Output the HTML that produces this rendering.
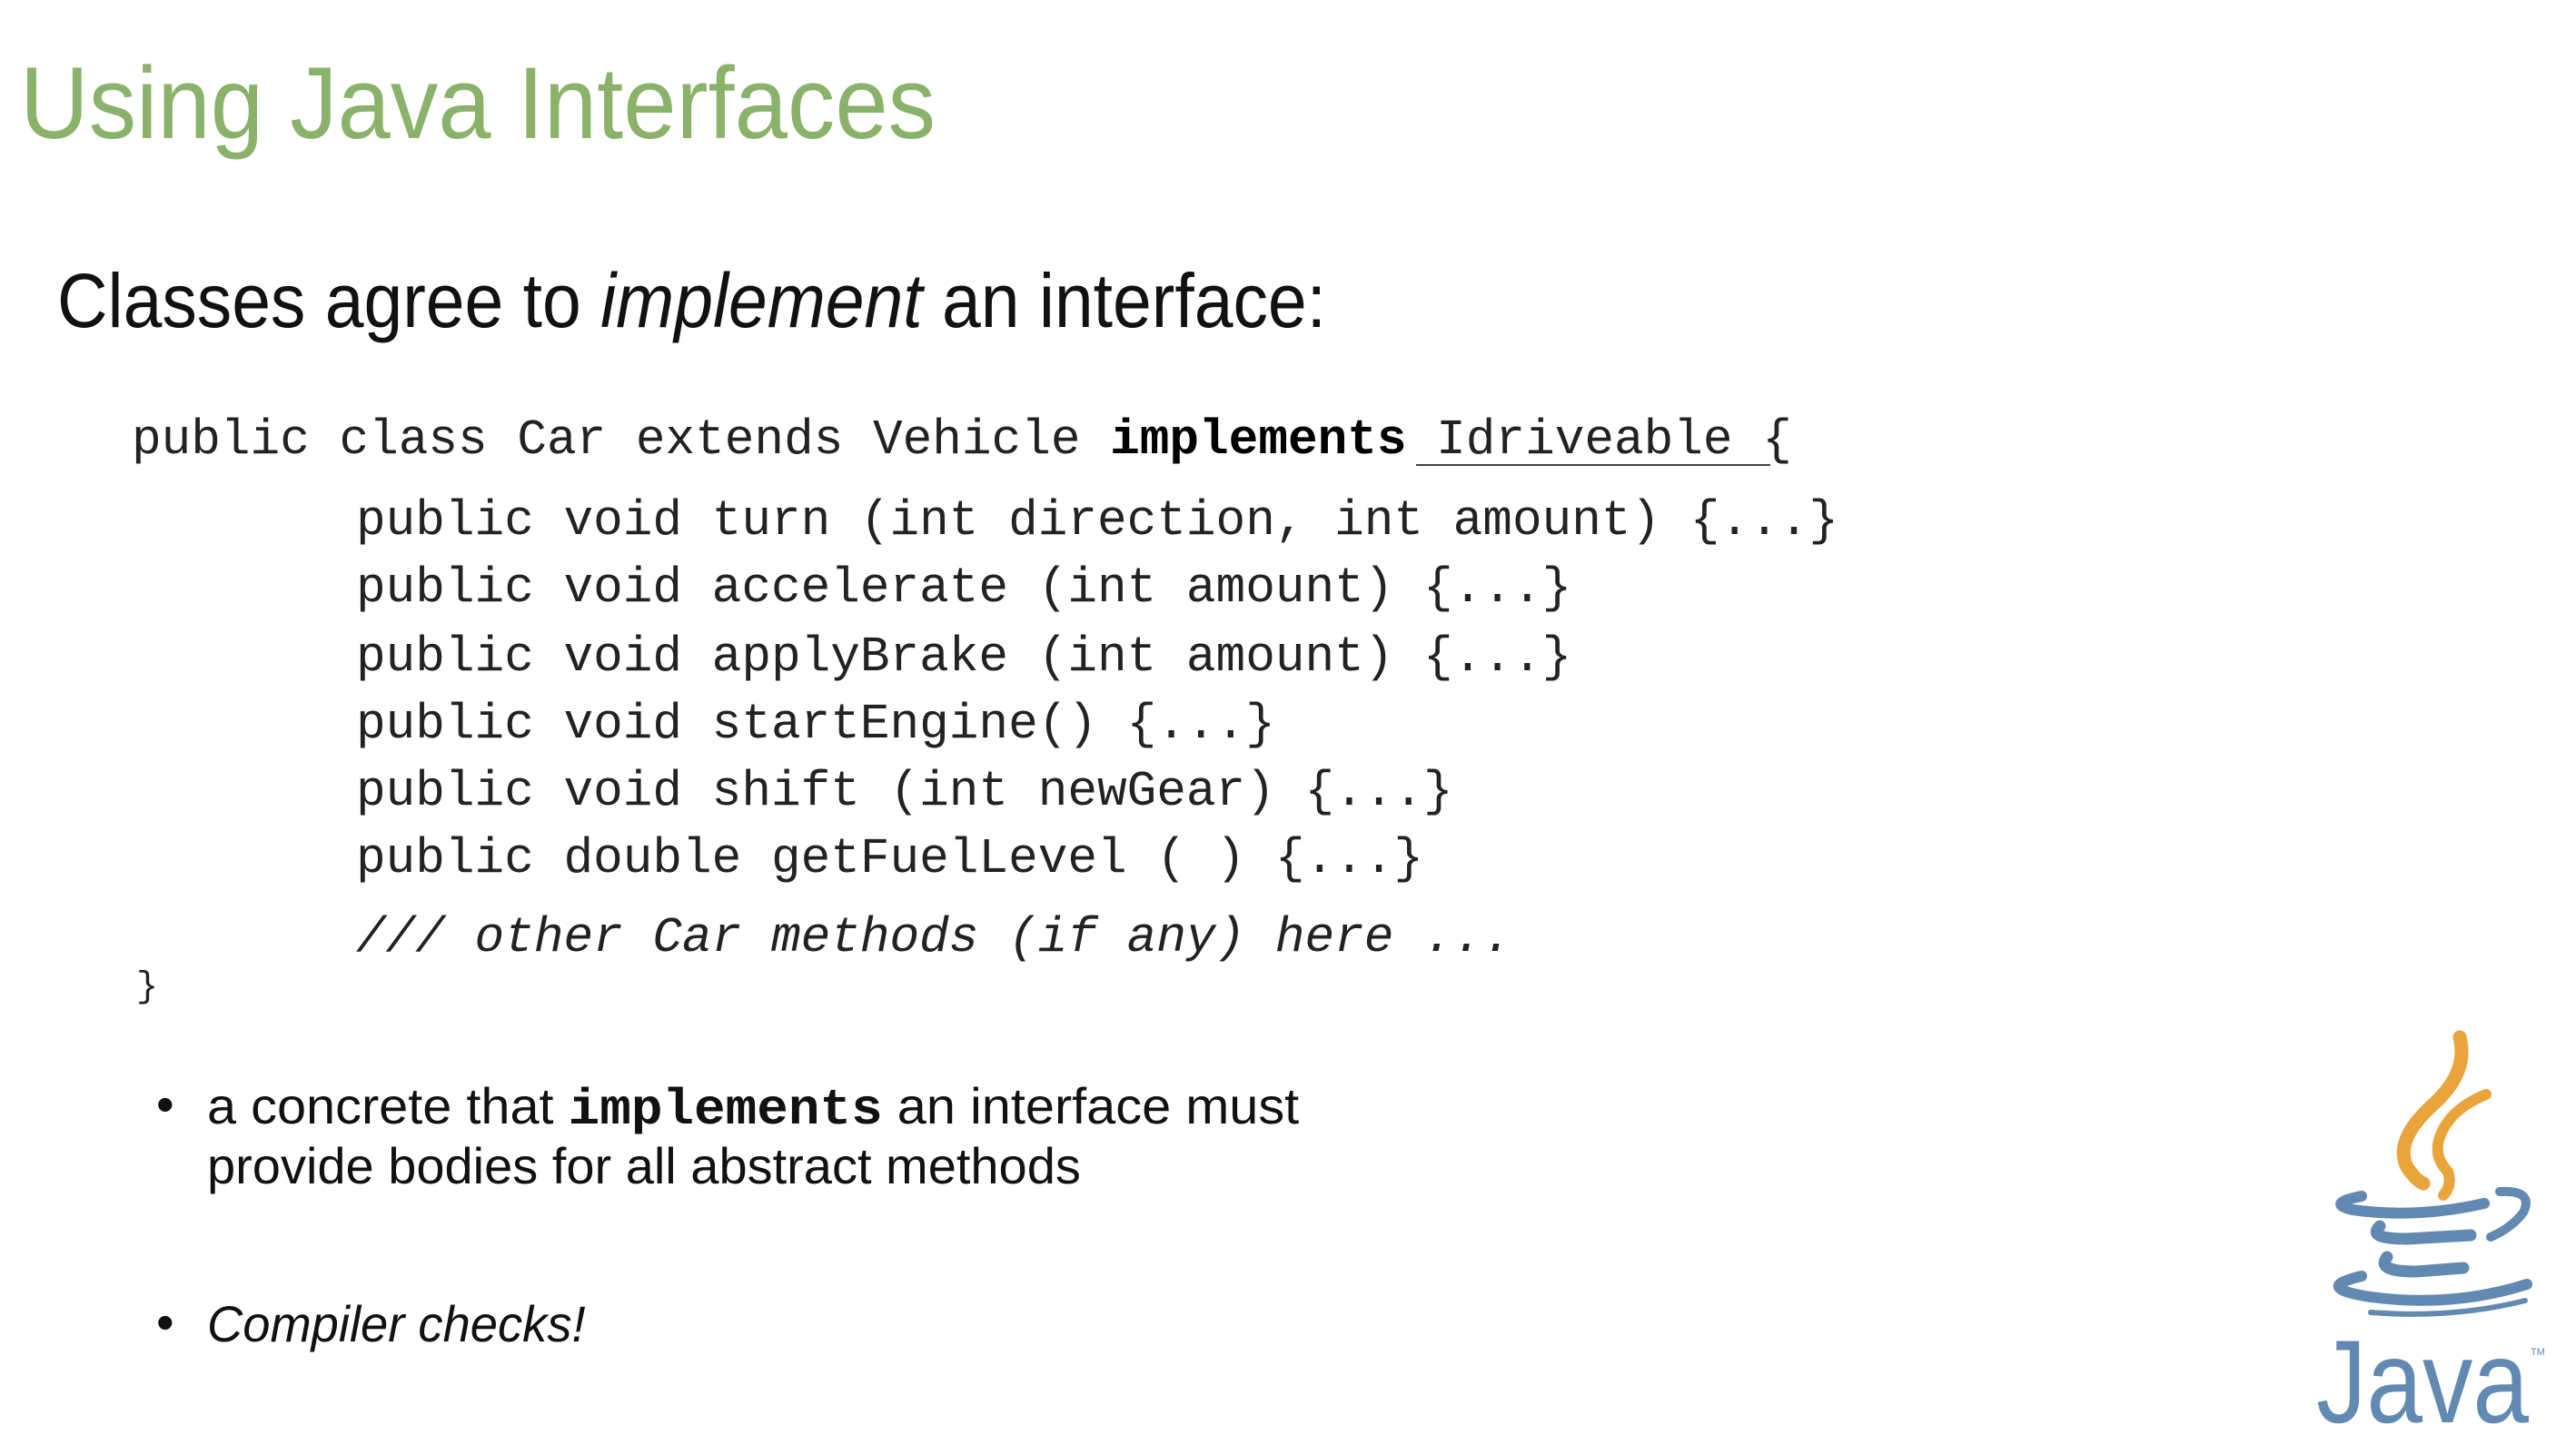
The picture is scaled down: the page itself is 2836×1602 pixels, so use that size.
<!DOCTYPE html>
<html><head><meta charset="utf-8"><style>
html,body{margin:0;padding:0;background:#fff;}
body{width:2836px;height:1602px;position:relative;overflow:hidden;font-family:"Liberation Sans",sans-serif;}
.a{position:absolute;white-space:pre;line-height:1;}
.sx{display:inline-block;transform-origin:0 0;}
.code{font-family:"Liberation Mono","Courier New",monospace;font-size:54.4px;color:#222;}
</style></head><body>
<div class="a" style="left:22px;top:58px;font-size:112px;color:#8ab26a;"><span class="sx" style="transform:scaleX(0.936)">Using Java Interfaces</span></div>
<div class="a" style="left:63px;top:289px;font-size:84px;color:#111;"><span class="sx" style="transform:scaleX(0.915)">Classes agree to <i>implement</i> an interface:</span></div>

<div class="a code" style="left:145px;top:459px;">public class Car extends Vehicle <b style="color:#000">implements</b> Idriveable {</div>
<div style="position:absolute;left:1559px;top:511px;width:390px;height:2px;background:#444;"></div>
<div class="a code" style="left:392px;top:548px;">public void turn (int direction, int amount) {...}</div>
<div class="a code" style="left:392px;top:622px;">public void accelerate (int amount) {...}</div>
<div class="a code" style="left:392px;top:698px;">public void applyBrake (int amount) {...}</div>
<div class="a code" style="left:392px;top:772px;">public void startEngine() {...}</div>
<div class="a code" style="left:392px;top:846px;">public void shift (int newGear) {...}</div>
<div class="a code" style="left:392px;top:920px;">public double getFuelLevel ( ) {...}</div>
<div class="a code" style="left:392px;top:1007px;font-style:italic;">/// other Car methods (if any) here ...</div>
<div class="a code" style="left:150px;top:1068px;font-size:40px;">}</div>

<div class="a" style="left:172px;top:1188px;font-size:56px;color:#111;">•</div>
<div class="a" style="left:228px;top:1190px;font-size:56px;color:#111;"><span class="sx" style="transform:scaleX(1.03)">a concrete that <b style="font-family:'Liberation Mono',monospace;font-size:56px;">implements</b> an interface must</span></div>
<div class="a" style="left:228px;top:1256px;font-size:56px;color:#111;"><span class="sx" style="transform:scaleX(1.0)">provide bodies for all abstract methods</span></div>
<div class="a" style="left:172px;top:1428px;font-size:56px;color:#111;">•</div>
<div class="a" style="left:228px;top:1430px;font-size:56px;color:#111;font-style:italic;"><span class="sx" style="transform:scaleX(0.97)">Compiler checks!</span></div>

<svg style="position:absolute;left:0;top:0" width="2836" height="1602" viewBox="0 0 2836 1602">
<g fill="none" stroke="#e9a43c" stroke-linecap="round">
<path d="M2708,1142 Q2718,1180 2680,1215 Q2635,1255 2650,1285 Q2660,1300 2668,1303" stroke-width="15"/>
<path d="M2737,1205 Q2695,1222 2685,1255 Q2680,1275 2695,1290 Q2700,1305 2690,1316" stroke-width="12"/>
</g>
<g fill="none" stroke="#6189b2" stroke-linecap="round">
<path d="M2600,1317 Q2560,1325 2590,1332 Q2660,1342 2735,1325" stroke-width="12"/>
<path d="M2752,1312 Q2790,1310 2778,1335 Q2765,1352 2742,1362" stroke-width="10"/>
<path d="M2620,1350 Q2605,1364 2650,1364 L2720,1360" stroke-width="13"/>
<path d="M2628,1384 Q2615,1400 2660,1400 L2712,1396" stroke-width="13"/>
<path d="M2600,1405 Q2545,1418 2610,1428 Q2700,1440 2782,1414" stroke-width="12"/>
<path d="M2610,1445 Q2700,1452 2780,1432" stroke-width="6"/>
</g>
<text x="2550" y="1566" font-family="Liberation Sans,sans-serif" font-size="130" fill="#6189b2" textLength="234" lengthAdjust="spacingAndGlyphs">Java</text>
<text x="2786" y="1492" font-family="Liberation Sans,sans-serif" font-size="11" fill="#6189b2">TM</text>
</svg>
</body></html>
